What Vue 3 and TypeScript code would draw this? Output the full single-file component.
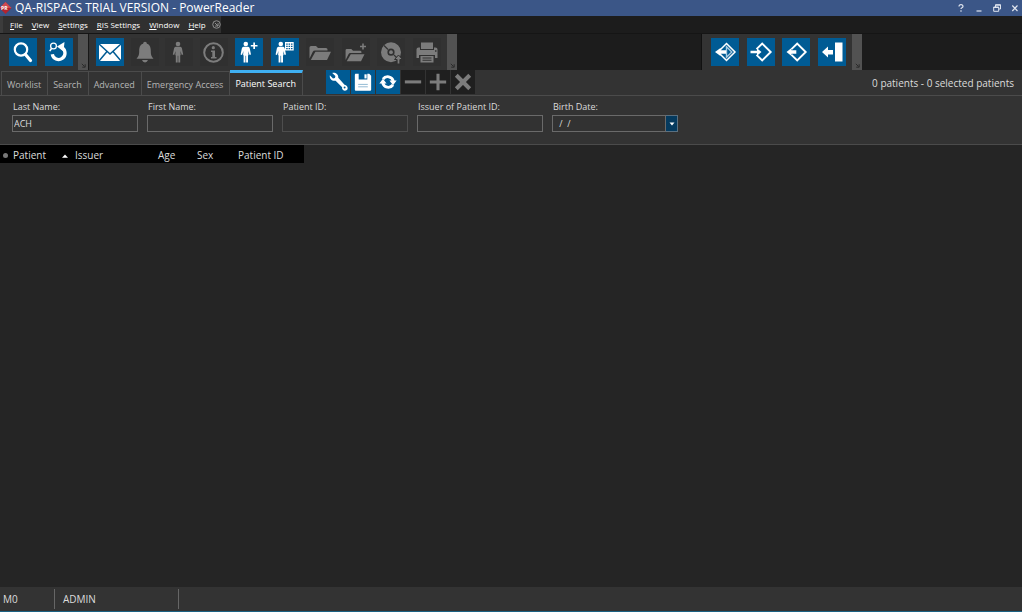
<script setup lang="ts">
import { ref } from 'vue'

interface Menu { key: string; rest: string }
interface Tool { name: string; icon: string; disabled?: boolean }

const menus: Menu[] = [
  { key: 'F', rest: 'ile' },
  { key: 'V', rest: 'iew' },
  { key: 'S', rest: 'ettings' },
  { key: 'R', rest: 'IS Settings' },
  { key: 'W', rest: 'indow' },
  { key: 'H', rest: 'elp' },
]

const groups: { id: string; tools: Tool[] }[] = [
  {
    id: 'set-general',
    tools: [
      { name: 'Messages', icon: 'mail' },
      { name: 'Alerts', icon: 'bell', disabled: true },
      { name: 'Patient', icon: 'person', disabled: true },
      { name: 'Information', icon: 'info', disabled: true },
    ],
  },
  {
    id: 'set-patient',
    tools: [
      { name: 'Add patient', icon: 'personPlus' },
      { name: 'Schedule patient', icon: 'personCal' },
      { name: 'Open folder', icon: 'folder', disabled: true },
      { name: 'Add folder', icon: 'folderPlus', disabled: true },
      { name: 'Export to disc', icon: 'disc', disabled: true },
      { name: 'Print', icon: 'print', disabled: true },
    ],
  },
]

const personAt = (x: number): string =>
  `<g transform="translate(${x} 0)"><circle cx="0" cy="6" r="2.300"/><path d="M-2.300 8.800h4.600q1.300 0 1.600 1.500l1.300 6.200-1.400.4-1.400-3.900.3 4.200h-.5v7.300H.3v-6.800h-.6v6.800h-1.900v-7.300h-.5l.3-4.200-1.400 3.900-1.400-.4 1.300-6.200q.3-1.500 1.600-1.500z"/></g>`

const folder =
  '<path d="M3.500 20.500V9.500q0-1.500 1.500-1.500h5l2 2h8q1.500 0 1.500 1.500v1H9q-1.500 0-2.200 1.300z"/><path d="M9.400 13.800H25L21 22H4.800z"/>'

const icons: Record<string, string> = {
  search:
    '<circle cx="12" cy="11.500" r="6.200" fill="none" stroke="currentColor" stroke-width="2.200"/><path d="M16.500 16.500l5 6" stroke="currentColor" stroke-width="3.200" stroke-linecap="round"/>',
  searchBack:
    '<circle cx="8.500" cy="8" r="2.900" fill="none" stroke="currentColor" stroke-width="1.300"/><path d="M6.700 10.300l-2 2.800" stroke="currentColor" stroke-width="1.600"/><path d="M17 9.700a6.400 6.400 0 1 1-9.700 6.500" fill="none" stroke="currentColor" stroke-width="3.300"/><path d="M19.500 4l-7.500 4.500 6.500 5z"/>',
  mail:
    '<path d="M3 6h22v17H3z"/><path d="M3 6l11 10L25 6M3 23l8-9.500M25 23l-8-9.500" fill="none" stroke="#005b94" stroke-width="1.500"/>',
  bell:
    '<circle cx="14" cy="5.500" r="1.800"/><path d="M14 5.500c4.600 0 5.800 3.500 5.800 7.500 0 4.500 1 5.700 2.700 7.700h-17c1.700-2 2.700-3.200 2.700-7.700 0-4 1.200-7.500 5.800-7.500z"/><path d="M11 22h6q-.8 2.400-3 2.400T11 22z"/>',
  person: personAt(13),
  info:
    '<circle cx="13.500" cy="14.500" r="9.300" fill="none" stroke="currentColor" stroke-width="2"/><circle cx="13.300" cy="9.700" r="1.600"/><path d="M11 12.500h4V19H16.500v1.500H11V19h1.300v-5H11z"/>',
  personPlus: personAt(10.8) + '<path d="M18.300 4.500H20v2.400h2.500v1.700H20V11h-1.700V8.600h-2.500V6.900h2.500z"/>',
  personCal:
    personAt(9.800) +
    '<path fill-rule="evenodd" d="M14 4h8.700v8.500H14zM15.200 5.600h1.500v1.200h-1.500zm2.400 0h1.500v1.200h-1.500zm2.400 0h1.500v1.200H20zm-4.800 2.200h1.500V9h-1.500zm2.400 0h1.500V9h-1.500zm2.400 0h1.500V9H20zm-4.800 2.200h1.500v1.200h-1.500zm2.400 0h1.500v1.200h-1.500zm2.400 0h1.500v1.200H20z"/>',
  folder,
  folderPlus:
    '<g transform="translate(.5 4) scale(.88)">' + folder + '</g><path d="M20.200 5.500h1.600v2.200H24v1.600h-2.200v2.200h-1.600V9.300H18V7.700h2.200z"/>',
  disc:
    '<path fill-rule="evenodd" d="M14 4.200a10 10 0 1 1 0 20 10 10 0 0 1 0-20zM14 10.600a3.600 3.600 0 1 0 0 7.200 3.600 3.600 0 0 0 0-7.200z"/><circle cx="14" cy="14.200" r="1.900"/><path d="M7 7.500l4 4M17 17l3 3" stroke="#333" stroke-width="1.200"/><path d="M17.500 21.500L21.500 17l4 4.500h-2.600V26h-2.800v-4.500z" stroke="#303030"/>',
  print:
    '<path d="M8 4.500h12V11H8z"/><path fill-rule="evenodd" d="M5.500 9.500H7V12h14V9.500h1.500q2 0 2 2V20H22v-3H6v3H3.500v-8.500q0-2 2-2zM22 12.300v1.400h1.500v-1.400z"/><path fill-rule="evenodd" d="M7.500 18h13v6.500h-13zM9.500 19.500v1h9v-1zm0 2.300v1h9v-1z"/>',
  diamondDouble:
    '<path d="M15.500 5.500l8.500 8.500-8.500 8.500L7 14z" fill="none" stroke="currentColor" stroke-width="1.500"/><path d="M15.500 8.700l5.300 5.300-5.300 5.300z" fill="none" stroke="#a9cbe0" stroke-width="1.400"/><path d="M4 14l5.500-4v2.300H15v3.400H9.500V18z"/>',
  diamondIn:
    '<path d="M9.500 11.200l5.700-5.700 8.500 8.500-8.500 8.500-5.700-5.700" fill="none" stroke="currentColor" stroke-width="1.900"/><path d="M3.500 12.800H10V10.300l4.500 3.700-4.500 3.700v-2.500H3.500z"/>',
  diamondOut:
    '<path d="M9.500 11.200l5.700-5.700 8.500 8.500-8.500 8.500-5.700-5.700" fill="none" stroke="currentColor" stroke-width="1.900"/><path d="M4.500 14l5-4v2.300h4.800v3.400H9.500V18z"/>',
  exit: '<path d="M17 4.500h7.500v19H17z"/><path d="M4 14l6-5.500V12h5v4.500h-5v3z"/>',
  wrench:
    '<path d="M4 5.500l3.300 3.300 2-.5.500-2L6.500 3c3-.8 6.500 1 6.300 5l6.500 7.300c2.200.3 3.700 2 3.200 4.600-1 2-3.600 2.400-5.200.5-.6-.7-.6-1.700-.5-2.500L10 11.200c-3.800.6-6.600-2-6-5.700z"/><circle cx="19.400" cy="18.300" r="1" fill="#005b94"/>',
  save:
    '<path fill-rule="evenodd" d="M4.500 4h14.500L21 6v14.500q0 1-1 1H5q-1 0-1-1V5zM8 4v6h9V4z"/><path d="M14 4.500h2.300v4.300H14z"/><path d="M7.500 15h10M7.500 17.500h10" stroke="#8fb8d2" stroke-width="1"/>',
  refresh:
    '<path d="M7.300 9.500A6 6 0 0 1 18 11.500M17.700 15.500A6 6 0 0 1 7 13.500" fill="none" stroke="currentColor" stroke-width="3"/><path d="M14 11h7.500l-3.700 4.800zM3.500 14H11L7.200 9.200z"/>',
  minus: '<path d="M4 10.800h17v3.200H4z"/>',
  plus: '<path d="M10.900 4h3.200v6.900H21v3.200h-6.900V21h-3.200v-6.900H4v-3.200h6.900z"/>',
  cross: '<path d="M5.500 5.500l14 14M19.500 5.500l-14 14" stroke="currentColor" stroke-width="4.200"/>',
}

const routes: Tool[] = [
  { name: 'Send all', icon: 'diamondDouble' },
  { name: 'Check in', icon: 'diamondIn' },
  { name: 'Check out', icon: 'diamondOut' },
  { name: 'Exit', icon: 'exit' },
]

const tabs = ['Worklist', 'Search', 'Advanced', 'Emergency Access', 'Patient Search']
const activeTab = ref('Patient Search')

const actions: Tool[] = [
  { name: 'Configure', icon: 'wrench' },
  { name: 'Save', icon: 'save' },
  { name: 'Refresh', icon: 'refresh' },
  { name: 'Remove', icon: 'minus', disabled: true },
  { name: 'Add', icon: 'plus', disabled: true },
  { name: 'Clear', icon: 'cross', disabled: true },
]

const fields = ref([
  { id: 'last', label: 'Last Name:', value: 'ACH', dim: false },
  { id: 'first', label: 'First Name:', value: '', dim: false },
  { id: 'pid', label: 'Patient ID:', value: '', dim: true },
  { id: 'issuer', label: 'Issuer of Patient ID:', value: '', dim: false },
])
const birth = ref(' /  /')
</script>

<template>
  <div class="app">
    <header class="title">
      <svg class="logo" viewBox="0 0 12 14" aria-hidden="true">
        <path d="M5.500 1L11.500 7l-6 6-6-6z" fill="#b3242f" />
        <path d="M5.500 1L11.500 7h-12z" fill="#cf4a52" />
        <text x="1" y="9" class="logo-text">PR</text>
      </svg>
      <h1>QA-RISPACS TRIAL VERSION - PowerReader</h1>
      <div class="win">
        <button aria-label="Help">
          <svg viewBox="0 0 10 10"><path d="M3 3.500q0-1.800 2-1.800t2 1.600q0 1-1.100 1.500-.9.400-.9 1.300M5 7.300v1.500" /></svg>
        </button>
        <button aria-label="Minimize"><svg viewBox="0 0 10 10"><path d="M2.500 8h5" /></svg></button>
        <button aria-label="Restore">
          <svg viewBox="0 0 10 10"><path class="thin" d="M3.500 4V1.700h5V6H6.700M1.700 4h5v4.300h-5zM3.500 2.200h5M1.700 4.500h5" /></svg>
        </button>
        <button aria-label="Close"><svg viewBox="0 0 10 10"><path d="M2.300 2.500l5.200 5.500M7.500 2.500L2.300 8" /></svg></button>
      </div>
    </header>

    <div class="menubar">
      <nav class="menus">
        <button v-for="m in menus" :key="m.rest"><u>{{ m.key }}</u>{{ m.rest }}</button>
        <button class="more" aria-label="More">
          <svg viewBox="0 0 10 10"><circle cx="5" cy="5" r="4.200" /><path d="M3.200 3.200l3.300 3.300M6.700 3.500v3.200H3.500" /></svg>
        </button>
      </nav>
    </div>

    <div class="toolbar">
      <div class="bar find">
        <div class="set pair">
          <button class="tool" aria-label="Search"><svg viewBox="0 0 28 28" v-html="icons.search" /></button>
          <button class="tool" aria-label="Repeat search"><svg viewBox="0 0 28 28" v-html="icons.searchBack" /></button>
        </div>
        <span class="grip"><svg viewBox="0 0 6 6"><path d="M1 1l3 3M5 1.500V5H1.500" /></svg></span>
      </div>
      <div class="bar main">
        <div v-for="g in groups" :key="g.id" class="set" :class="g.id">
          <button v-for="t in g.tools" :key="t.name" class="tool" :disabled="t.disabled" :aria-label="t.name">
            <svg viewBox="0 0 28 28" v-html="icons[t.icon]" />
          </button>
        </div>
        <span class="grip"><svg viewBox="0 0 6 6"><path d="M1 1l3 3M5 1.500V5H1.500" /></svg></span>
      </div>
      <div class="bar routes">
        <div class="set route">
          <button v-for="t in routes" :key="t.name" class="tool" :aria-label="t.name">
            <svg viewBox="0 0 28 28" v-html="icons[t.icon]" />
          </button>
        </div>
        <span class="grip"><svg viewBox="0 0 6 6"><path d="M1 1l3 3M5 1.500V5H1.500" /></svg></span>
      </div>
    </div>

    <div class="tabrow">
      <div class="tabs" role="tablist">
        <button
          v-for="t in tabs"
          :key="t"
          role="tab"
          :aria-selected="t === activeTab"
          :class="{ active: t === activeTab }"
          @click="activeTab = t"
        >{{ t }}</button>
      </div>
      <div class="actions">
        <button v-for="a in actions" :key="a.name" :disabled="a.disabled" :aria-label="a.name">
          <svg viewBox="0 0 25 25" v-html="icons[a.icon]" />
        </button>
      </div>
      <p class="count">0 patients - 0 selected patients</p>
    </div>

    <form class="filters" @submit.prevent>
      <div v-for="f in fields" :key="f.id" class="field">
        <label :for="f.id">{{ f.label }}</label>
        <input :id="f.id" v-model="f.value" type="text" :class="{ dim: f.dim }" autocomplete="off" />
      </div>
      <div class="field">
        <label for="birth">Birth Date:</label>
        <div class="date">
          <input id="birth" v-model="birth" type="text" autocomplete="off" />
          <button type="button" aria-label="Choose date"><svg viewBox="0 0 6 4"><path d="M.5.5h5L3 3.500z" /></svg></button>
        </div>
      </div>
    </form>

    <main>
      <table>
        <thead>
          <tr>
            <th class="mark" aria-label="Status"><i></i></th>
            <th class="patient">Patient<svg viewBox="0 0 8 4"><path d="M1 3.800L4 .5l3 3.300z" /></svg></th>
            <th class="issuer">Issuer</th>
            <th class="age">Age</th>
            <th class="sex">Sex</th>
            <th class="pid">Patient ID</th>
          </tr>
        </thead>
        <tbody></tbody>
      </table>
    </main>

    <footer>
      <span class="station">M0</span>
      <span class="user">ADMIN</span>
    </footer>
  </div>
</template>

<style>
body {
  margin: 0;
  background: #252525;
}
</style>

<style scoped>
* {
  box-sizing: border-box;
}
.app {
  display: flex;
  flex-direction: column;
  min-height: 100vh;
  font: 9px/14px "Open Sans", "Noto Sans", sans-serif;
  color: #dcdcdc;
  background: #252525;
}
button {
  margin: 0;
  padding: 0;
  border: 0;
  background: none;
  color: inherit;
  font: inherit;
}
svg {
  display: block;
}
.title {
  display: flex;
  align-items: center;
  height: 16px;
  background: #3b5687;
  color: #fff;
}
.logo {
  width: 12px;
  height: 14px;
}
.logo-text {
  font: bold 5px "Open Sans", sans-serif;
  fill: #fff;
}
h1 {
  flex: 1;
  margin: 0 0 0 3px;
  font-size: 12px;
  line-height: 16px;
  font-weight: 400;
}
.win {
  display: flex;
  gap: 8px;
  padding-right: 2px;
}
.win svg {
  width: 10px;
  height: 10px;
  fill: none;
  stroke: #dfe4ee;
  stroke-width: 1.2;
}
.win .thin {
  stroke-width: 1;
}
.menubar {
  display: flex;
  height: 18px;
  background: #1c1c1c;
  border-bottom: 1px solid #151515;
}
.menus {
  display: flex;
  align-items: center;
  gap: 9px;
  padding-left: 7px;
  border-left: 3px solid #3c3c3c;
  background: #303030;
  font-size: 8px;
  color: #fff;
}
.menus .more {
  margin-left: -3px;
}
.more svg {
  width: 9px;
  height: 9px;
  fill: none;
  stroke: #999;
  stroke-width: 1;
}
.toolbar {
  display: flex;
  height: 36px;
  background: #1c1c1c;
}
.bar {
  display: flex;
  align-items: center;
  background: #333;
}
.find {
  width: 89px;
  padding-left: 9px;
  border-right: 1px solid #181818;
}
.main {
  width: 368px;
  padding-left: 7px;
}
.routes {
  width: 161px;
  margin-left: auto;
  margin-right: 160px;
  padding-left: 9px;
  border-left: 1px solid #111;
}
.set {
  display: flex;
  justify-content: space-between;
}
.pair {
  width: 64px;
}
.set-general {
  width: 132px;
  margin-right: 7px;
}
.set-patient {
  width: 206px;
}
.route {
  width: 135px;
}
.tool {
  width: 28px;
  height: 28px;
  background: #005b94;
  color: #fff;
}
.tool svg {
  width: 28px;
  height: 28px;
  fill: currentColor;
}
.tool:disabled {
  background: #303030;
  color: #7c7c7c;
}
.grip {
  display: flex;
  align-items: flex-end;
  justify-content: center;
  align-self: stretch;
  width: 10px;
  margin-left: auto;
  padding-bottom: 2px;
  background: #525252;
}
.grip svg {
  width: 5px;
  height: 5px;
  fill: none;
  stroke: #222;
}
.tabrow {
  display: flex;
  height: 26px;
  background: #333;
  border-bottom: 1px solid #4b4b4b;
}
.tabs {
  display: flex;
  padding-left: 1px;
}
.tabs button {
  height: 24px;
  margin-top: 1px;
  padding: 2px 6px 0 5px;
  border: solid #4b4b4b;
  border-width: 1px 1px 0 0;
  color: #b5b5b5;
}
.tabs button:first-child {
  border-left-width: 1px;
}
.tabs .active {
  height: 25px;
  margin-top: 0;
  padding-top: 0;
  border-top: 3px solid #3fb0f2;
  color: #fff;
}
.actions {
  display: flex;
  gap: 1px;
  height: 24px;
  margin-left: 23px;
}
.actions button {
  width: 24px;
  background: #005b94;
  color: #fff;
}
.actions button:disabled {
  background: #1f1f1f;
  color: #7c7c7c;
}
.actions svg {
  width: 24px;
  height: 24px;
  fill: currentColor;
}
.count {
  margin: 0 8px 0 auto;
  font-size: 10px;
  line-height: 26px;
}
.filters {
  display: flex;
  gap: 9px;
  height: 49px;
  padding: 4px 0 0 12px;
  background: #333;
  border-bottom: 1px solid #4b4b4b;
}
.field {
  width: 126px;
}
.field label {
  display: block;
  padding-left: 1px;
}
.field input {
  display: block;
  width: 100%;
  height: 17px;
  margin: 1px 0 0;
  padding: 0 1px;
  border: 1px solid #6a6a6a;
  border-radius: 0;
  outline: 0;
  background: #323232;
  color: #dcdcdc;
  font: inherit;
}
.field .dim {
  border-color: #4e4e4e;
}
.date {
  display: flex;
}
.date input {
  flex: 1;
  min-width: 0;
  padding-left: 4px;
  white-space: pre;
}
.date button {
  display: grid;
  place-items: center;
  width: 12px;
  height: 17px;
  margin-top: 1px;
  border: 1px solid #5b7080;
  border-left: 0;
  background: #053a5e;
}
.date svg {
  width: 6px;
  height: 4px;
  fill: #fff;
}
main {
  flex: 1;
}
table {
  width: 304px;
  border-spacing: 0;
  table-layout: fixed;
  background: #000;
}
th {
  height: 18px;
  padding: 2px 0 0;
  font-size: 10px;
  line-height: 16px;
  font-weight: 400;
  text-align: left;
  white-space: nowrap;
}
th.mark {
  width: 13px;
}
.mark i {
  display: block;
  width: 5px;
  height: 5px;
  margin-left: 3px;
  border-radius: 50%;
  background: #777;
}
th.patient {
  width: 62px;
}
.patient svg {
  display: inline-block;
  width: 8px;
  height: 4px;
  margin-left: 15px;
  vertical-align: middle;
  fill: #fff;
}
th.issuer {
  width: 83px;
}
th.age {
  width: 39px;
}
th.sex {
  width: 41px;
}
footer {
  display: flex;
  align-items: center;
  height: 25px;
  background: #333;
  border-bottom: 1px solid #1c6283;
  font-size: 10px;
}
footer span {
  height: 20px;
  line-height: 20px;
  border-right: 1px solid #666;
}
.station {
  width: 55px;
  padding-left: 3px;
}
.user {
  width: 124px;
  padding-left: 8px;
}
</style>
